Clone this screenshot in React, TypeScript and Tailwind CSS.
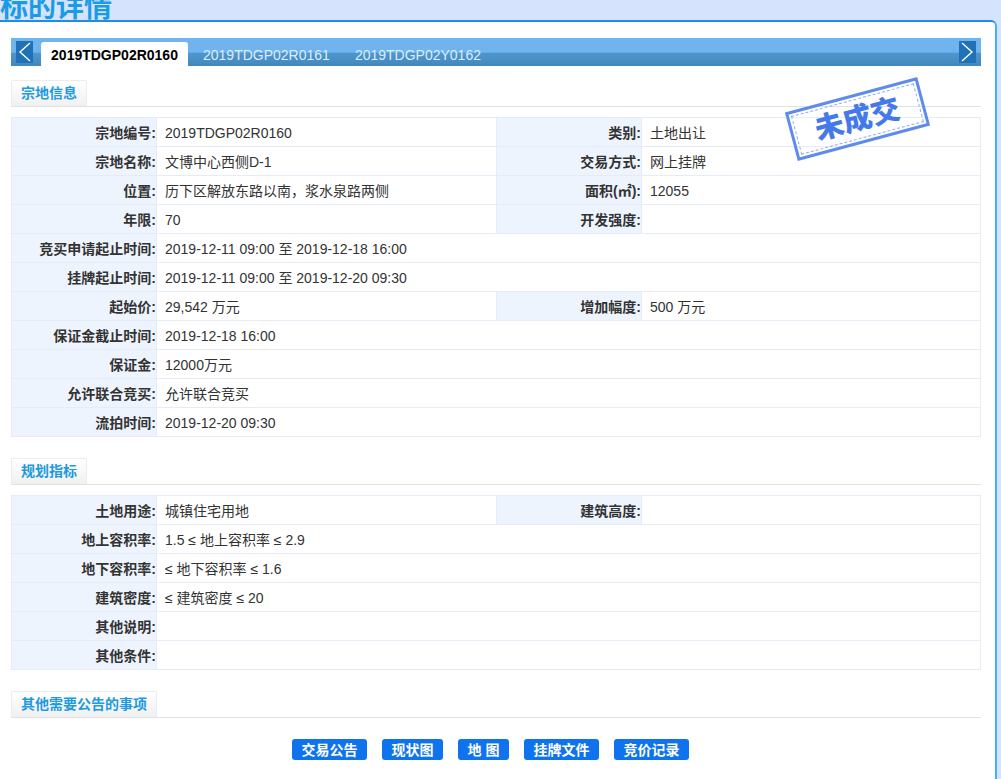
import type { ReactNode } from "react";

const font = "font-['Liberation_Sans','Noto_Sans_CJK_SC',sans-serif]";

function Label({ children }: { children: ReactNode }) {
  return (
    <td className="h-[29px] p-0 pt-px text-right font-bold text-[#333] bg-[#eef4fe] border border-[#e6ecf5]">
      {children}
    </td>
  );
}

function Value({ children, wide }: { children?: ReactNode; wide?: boolean }) {
  return (
    <td
      colSpan={wide ? 3 : 1}
      className="h-[29px] p-0 pt-px pl-2 text-[#333] bg-white border border-[#e6ecf5]"
    >
      {children}
    </td>
  );
}

function Cols() {
  return (
    <colgroup>
      <col className="w-[145px]" />
      <col className="w-[340px]" />
      <col className="w-[145px]" />
      <col />
    </colgroup>
  );
}

function SectionTitle({ children }: { children: ReactNode }) {
  return (
    <div className="flex border-b border-[#e2e2e2]">
      <div className="h-[26px] px-[9px] pb-px flex items-center text-sm font-bold text-[#1d9ae0] bg-gradient-to-b from-white to-[#f0f0f0] border border-b-0 border-[#ececec] rounded-t-[2px]">
        {children}
      </div>
    </div>
  );
}

function ActionButton({ children }: { children: ReactNode }) {
  return (
    <button className="h-[21px] px-[9.5px] bg-[#0f73ee] text-white text-sm leading-none font-bold rounded-[3px]">
      {children}
    </button>
  );
}

function Arrow({ side }: { side: "left" | "right" }) {
  return (
    <div className={`absolute top-[3px] w-[17px] h-[22px] bg-[#2071b5] ${side === "left" ? "left-[5px]" : "right-[5px]"}`}>
      <svg viewBox="0 0 17 22" className="w-[17px] h-[22px]" fill="none" stroke="white" strokeWidth="1.4">
        {side === "left" ? <path d="M14 2 L4 11 L14 20" /> : <path d="M3 2 L13 11 L3 20" />}
      </svg>
    </div>
  );
}

export default function App() {
  return (
    <div className={`h-[779px] overflow-hidden bg-[#d6e3fc] text-sm ${font}`}>
      <div className="h-5 overflow-hidden">
        <h1 className="-mt-[9px] text-[28px] leading-[34px] font-bold text-[#1a9be8]">标的详情</h1>
      </div>

      <div className="relative w-[997px] h-[759px] bg-white border-t-2 border-r-2 border-[#1d8cec] border-r-[#45b0f2] rounded-tr-[6px] pl-[11px] pr-[14px] pt-4">
        {/* tab bar */}
        <div className="h-[28px] flex items-end relative bg-[linear-gradient(#6fb4ee_0,#6fb4ee_50%,#5096ce_55%,#4288bb_100%)]">
          <Arrow side="left" />
          <Arrow side="right" />
          <div className="ml-[30px] flex items-end">
            <div className="h-6 pt-px w-[147px] bg-white rounded-t-[3px] flex items-center justify-center font-bold text-black">
              2019TDGP02R0160
            </div>
            <div className="h-6 pt-px ml-[15px] flex items-center text-[#dcedfb]">2019TDGP02R0161</div>
            <div className="h-6 pt-px ml-[25px] flex items-center text-[#dcedfb]">2019TDGP02Y0162</div>
          </div>
        </div>

        <div className="mt-[14px]">
          <SectionTitle>宗地信息</SectionTitle>
        </div>

        {/* stamp */}
        <div className="absolute z-10 left-[789px] top-[72px] w-[137px] h-[50px] -rotate-[15deg] border-[3px] border-[#5f8bea] p-[2px]">
          <div className="h-full border border-dashed border-[#8fabf2] flex items-center justify-center">
            <span className="text-[29px] leading-none font-black text-[#4579ea]">未成交</span>
          </div>
        </div>

        <table className="mt-[10px] w-[970px] table-fixed border-collapse">
          <Cols />
          <tbody>
            <tr>
              <Label>宗地编号:</Label>
              <Value>2019TDGP02R0160</Value>
              <Label>类别:</Label>
              <Value>土地出让</Value>
            </tr>
            <tr>
              <Label>宗地名称:</Label>
              <Value>文博中心西侧D-1</Value>
              <Label>交易方式:</Label>
              <Value>网上挂牌</Value>
            </tr>
            <tr>
              <Label>位置:</Label>
              <Value>{"历下区解放东路以南\uFF0C浆水泉路两侧"}</Value>
              <Label>面积(㎡):</Label>
              <Value>12055</Value>
            </tr>
            <tr>
              <Label>年限:</Label>
              <Value>70</Value>
              <Label>开发强度:</Label>
              <Value />
            </tr>
            <tr>
              <Label>竞买申请起止时间:</Label>
              <Value wide>2019-12-11 09:00 至 2019-12-18 16:00</Value>
            </tr>
            <tr>
              <Label>挂牌起止时间:</Label>
              <Value wide>2019-12-11 09:00 至 2019-12-20 09:30</Value>
            </tr>
            <tr>
              <Label>起始价:</Label>
              <Value>29,542 万元</Value>
              <Label>增加幅度:</Label>
              <Value>500 万元</Value>
            </tr>
            <tr>
              <Label>保证金截止时间:</Label>
              <Value wide>2019-12-18 16:00</Value>
            </tr>
            <tr>
              <Label>保证金:</Label>
              <Value wide>12000万元</Value>
            </tr>
            <tr>
              <Label>允许联合竞买:</Label>
              <Value wide>允许联合竞买</Value>
            </tr>
            <tr>
              <Label>流拍时间:</Label>
              <Value wide>2019-12-20 09:30</Value>
            </tr>
          </tbody>
        </table>

        <div className="mt-[21px]">
          <SectionTitle>规划指标</SectionTitle>
        </div>

        <table className="mt-[10px] w-[970px] table-fixed border-collapse">
          <Cols />
          <tbody>
            <tr>
              <Label>土地用途:</Label>
              <Value>城镇住宅用地</Value>
              <Label>建筑高度:</Label>
              <Value />
            </tr>
            <tr>
              <Label>地上容积率:</Label>
              <Value wide>1.5 ≤ 地上容积率 ≤ 2.9</Value>
            </tr>
            <tr>
              <Label>地下容积率:</Label>
              <Value wide>≤ 地下容积率 ≤ 1.6</Value>
            </tr>
            <tr>
              <Label>建筑密度:</Label>
              <Value wide>≤ 建筑密度 ≤ 20</Value>
            </tr>
            <tr>
              <Label>其他说明:</Label>
              <Value wide />
            </tr>
            <tr>
              <Label>其他条件:</Label>
              <Value wide />
            </tr>
          </tbody>
        </table>

        <div className="mt-[21px]">
          <SectionTitle>其他需要公告的事项</SectionTitle>
        </div>

        <div className="mt-[21px] flex justify-center gap-[15px] pr-[11px]">
          <ActionButton>交易公告</ActionButton>
          <ActionButton>现状图</ActionButton>
          <ActionButton>地 图</ActionButton>
          <ActionButton>挂牌文件</ActionButton>
          <ActionButton>竞价记录</ActionButton>
        </div>
      </div>
    </div>
  );
}
